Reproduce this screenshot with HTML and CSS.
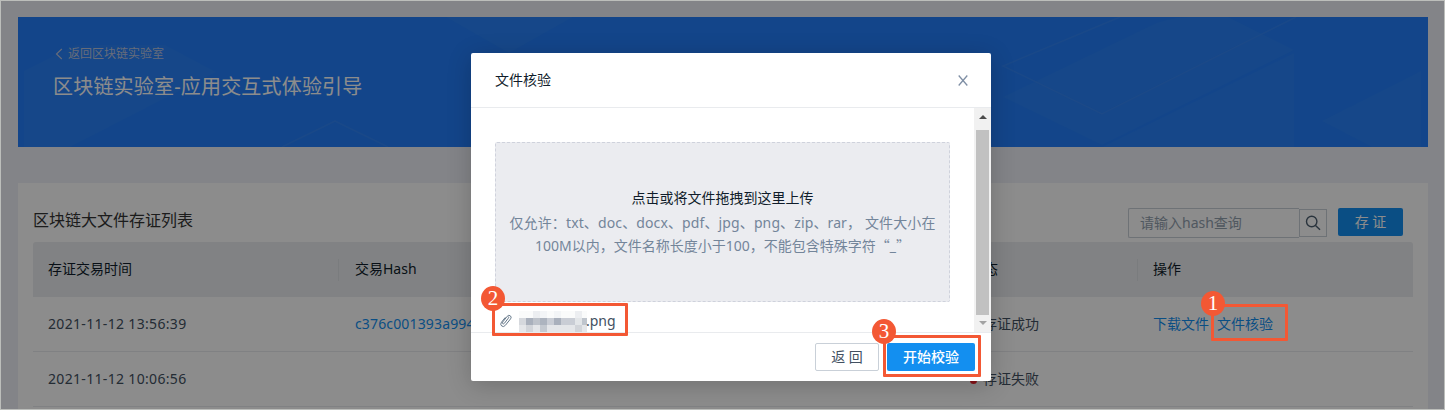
FILE: index.html
```html
<!DOCTYPE html>
<html lang="zh-CN">
<head>
<meta charset="utf-8">
<title>区块链实验室</title>
<link rel="stylesheet" href="styles.css">
</head>
<body>
<div class="page">
  <header class="banner">
    <svg class="banner-art" viewBox="0 0 1410 130" aria-hidden="true">
      <g fill="#4693ee" fill-opacity=".13">
        <path d="M6 54L58 28H147L198 55L52 130H6z"/>
        <path d="M428 0L491 36L555 0z"/>
        <path d="M985 80L1130 10Q1150 0 1170 0H1210L1276 33L1084 128z"/>
        <path d="M1084 130L1276 36V130z"/>
        <path d="M1304 104L1403 54V130H1354z"/>
      </g>
      <path d="M264 130L317 104L370 130M1102 0L985 49L1084 97L1278 0" fill="none" stroke="#5d94ee" stroke-opacity=".22" stroke-width="1.4"/>
    </svg>
    <div class="banner-text">
      <a class="back"><svg width="8" height="12" viewBox="0 0 8 12"><path d="M6.8 1L1.5 6L6.8 11" fill="none" stroke="currentColor" stroke-width="1.1"/></svg><span>返回区块链实验室</span></a>
      <h1>区块链实验室-应用交互式体验引导</h1>
    </div>
  </header>
  <main class="card">
    <div class="toolbar">
      <h2>区块链大文件存证列表</h2>
      <div class="search">
        <span class="search-input">请输入hash查询</span>
        <span class="search-btn"><svg width="16" height="16" viewBox="0 0 16 16"><g fill="none" stroke="#4e5f70" stroke-width="1.4"><circle cx="6.7" cy="6.5" r="5.2"/><path d="M10.5 10.4L15 14.8"/></g></svg></span>
      </div>
      <button class="btn primary save">存 证</button>
    </div>
    <div class="row head"><span>存证交易时间</span><span class="sep">交易Hash</span><span>状态</span><span class="sep last">操作</span></div>
    <div class="row"><span class="time">2021-11-12 13:56:39</span><span class="link hash">c376c001393a994</span><span class="status"><i class="dot ok"></i>存证成功</span><span class="ops link"><a>下载文件</a><a>文件核验</a></span></div>
    <div class="row"><span class="time">2021-11-12 10:06:56</span><span></span><span class="status"><i class="dot bad"></i>存证失败</span><span></span></div>
  </main>
</div>
<div class="mask"></div>
<section class="modal">
  <div class="modal-head"><span>文件核验</span><svg width="10" height="11" viewBox="0 0 10 11"><path d="M.7.5L9.3 10.5M9.3.5L.7 10.5" fill="none" stroke="#7f8fa5" stroke-width="1.3"/></svg></div>
  <div class="modal-body">
    <div class="content">
      <div class="drop">
        <p class="drop-title">点击或将文件拖拽到这里上传</p>
        <p class="drop-hint l1">仅允许：txt、doc、docx、pdf、jpg、png、zip、rar， 文件大小在</p>
        <p class="drop-hint">100M以内，文件名称长度小于100，不能包含特殊字符<span class="q">“</span>_<span class="q">”</span></p>
      </div>
      <div class="file">
        <svg width="12" height="14" viewBox="0 0 12 14"><path d="M8.3 4.2L4.5 9.2Q3.5 10.3 2.8 9.7Q2 9 2.9 7.8L7.2 2.3Q8.7.6 10.3 1.8Q11.9 3.1 10.6 4.8L5.4 11.3Q3.5 13.5 1.7 12Q-.2 10.4 1.5 8.2L5.3 3.4M8.3 4.2Q9.1 3.1 8.5 2.6" fill="none" stroke="#66788a" stroke-width="1"/></svg>
        <svg class="mosaic" width="68" height="21" viewBox="0 0 68 21" shape-rendering="crispEdges">
          <path fill="#fafbfb" d="M0 0h68v7H0z"/><path fill="#eceef1" d="M14 0h7v7h-7zM56 0h7v7h-7z"/><path fill="#f3f5f7" d="M21 0h7v7h-7zM35 0h7v7h-7z"/>
          <path fill="#d5d8dd" d="M0 7h7v7H0z"/><path fill="#a9b0bc" d="M7 7h7v7H7zM35 7h7v7h-7z"/><path fill="#bdc2ca" d="M14 7h7v7h-7z"/><path fill="#adb4bf" d="M21 7h7v7h-7z"/><path fill="#c9cdd5" d="M28 7h7v7h-7zM42 7h14v7H42z"/><path fill="#e2e5e8" d="M56 7h7v7h-7z"/><path fill="#bfc5cd" d="M63 7h5v7h-5z"/>
          <path fill="#e4e6e9" d="M0 14h68v7H0z"/><path fill="#d1d4d9" d="M7 14h7v7H7zM56 14h7v7h-7z"/><path fill="#c4c9d0" d="M21 14h7v7h-7z"/>
        </svg><span class="ext">.png</span>
      </div>
    </div>
    <div class="scroll"><i class="up"></i><i class="thumb"></i><i class="down"></i></div>
  </div>
  <div class="modal-foot"><button class="btn plain">返 回</button><button class="btn primary start">开始校验</button></div>
</section>
<div class="callout c1"><b>1</b></div>
<div class="callout c2"><b>2</b></div>
<div class="callout c3"><b>3</b></div>
<div class="frame"></div>
</body>
</html>
```
FILE: styles.css
```css
*{box-sizing:border-box}
body{margin:0;width:1445px;height:410px;overflow:hidden;background:#eef0f7;font:14px/22px "Noto Sans","Noto Sans CJK SC",sans-serif;color:#425061}
h1,h2,p{margin:0;font-weight:400}
button{font:inherit}
.page{height:410px;overflow:hidden;padding:17px 17px 0 18px}
.banner{display:grid;height:130px;background:#247ffb;overflow:hidden}
.banner>*{grid-area:1/1}
.banner-art{width:1410px;height:130px}
.banner-text{padding:26px 0 0 35px;display:flex;flex-direction:column}
.back{display:flex;align-items:center;gap:5px;padding-left:2px;font-size:12px;height:22px;line-height:22px;color:#bbc5df}
h1{font-size:20px;line-height:30px;margin-top:7px;color:#fff;letter-spacing:.19px}
.card{margin-top:36px;padding:24px 15px 0;height:240px;background:#fff;overflow:hidden}
.toolbar{display:flex;align-items:flex-start;height:35px}
h2{flex:1;font-size:16px;line-height:26px;color:#333}
.search{display:flex;align-items:center;margin:1px 11px 0 0}
.search-input{width:171px;height:30px;border:1px solid #c9d0d8;border-right:0;border-radius:2px 0 0 2px;padding-left:11px;line-height:28px;color:#92a0ae}
.search-btn{width:28px;height:28px;border:1px solid #c9d0d8;display:flex;align-items:center;justify-content:center}
.btn{display:block;height:28px;padding:0;border:0;border-radius:2px;line-height:26px;text-align:center}
.primary{background:#138ff0;color:#fff}
.save{width:65px;margin:1px 10px 0 0}
.row{display:grid;grid-template-columns:305px 616px 183px 1fr;align-items:center;height:55px;width:1380px;border-bottom:1px solid #e9ecef;white-space:nowrap}
.row>span{padding-left:16px}
.row>span:first-child{padding-left:15px}
.head{background:#ebedf0;color:#101d2b;border:0;border-radius:3px 3px 0 0;line-height:20px}
.head>span{padding-bottom:2px}
.head .sep{border-left:1px solid #dfe2e6}
.head .last{padding-left:15px}
.row .hash{padding-left:17px;letter-spacing:.15px}
.link{color:#138ff0}
.ops{display:flex;gap:8px}
.time{letter-spacing:.33px}
.status{display:flex;align-items:center}
.dot{width:7px;height:7px;border-radius:50%;margin:2px 6px 0 0}
.ok{background:#22b573}
.bad{background:#f5222d}
.mask{position:absolute;inset:0;height:410px;background:rgba(0,0,0,.45)}
.modal{position:absolute;left:471px;top:53px;width:520px;height:328px;background:#fff;border-radius:2px;box-shadow:0 4px 24px rgba(0,0,0,.2)}
.modal-head{height:55px;border-bottom:1px solid #e9ebee;padding:0 23px 0 24px;display:flex;align-items:center;justify-content:space-between;color:#101d2b}
.modal-body{height:224px;display:flex}
.content{flex:1;padding:34px 24px 0}
.drop{width:455px;height:160px;background:#ebecf0;border:1px dashed #cfd2dc;border-radius:2px;padding-top:42px;text-align:center;white-space:nowrap}
.drop-title{line-height:26px;color:#101d2b}
.drop-hint{line-height:22px;color:#73859a}
.l1{margin-top:1px;letter-spacing:.12px}
.q{font-family:"Noto Sans CJK SC",sans-serif}
.file{display:flex;align-items:center;height:38px;padding-left:5px}
.mosaic{margin-left:7px}
.ext{margin-left:-1px}
.scroll{width:17px;background:#f1f1f1;display:flex;flex-direction:column;align-items:center}
.up,.down{width:0;border:4px solid transparent;height:0}
.up{border-top:0;border-bottom-color:#4c4c4c;margin-top:7px}
.thumb{width:13px;height:185px;background:#c1c1c1;margin-top:11px}
.down{border-bottom:0;border-top-color:#a3a3a3;margin-top:6px}
.modal-foot{height:49px;border-top:1px solid #e9ebee;display:flex;justify-content:flex-end;align-items:flex-start;gap:8px;padding:10px 16px 0 0}
.plain{width:64px;border:1px solid #c9d0d8;background:#fff;color:#425061}
.start{width:88px;font-weight:500}
.callout{position:absolute;border:3px solid #f35834;border-radius:1px}
.callout b{position:absolute;width:24px;height:25px;border-radius:50%;background:#f35834;color:#fff;font:400 21px/25px "Liberation Serif",serif;text-align:center}
.c1{left:1211px;top:304px;width:77px;height:37px}
.c1 b{left:-13px;top:-16px}
.c2{left:492px;top:303px;width:136px;height:33px}
.c2 b{left:-14px;top:-20px}
.c3{left:883px;top:335px;width:98px;height:42px}
.c3 b{left:-14px;top:-19px}
.frame{position:absolute;inset:0;width:1445px;height:410px;border:1px solid #bcbebb}
```
